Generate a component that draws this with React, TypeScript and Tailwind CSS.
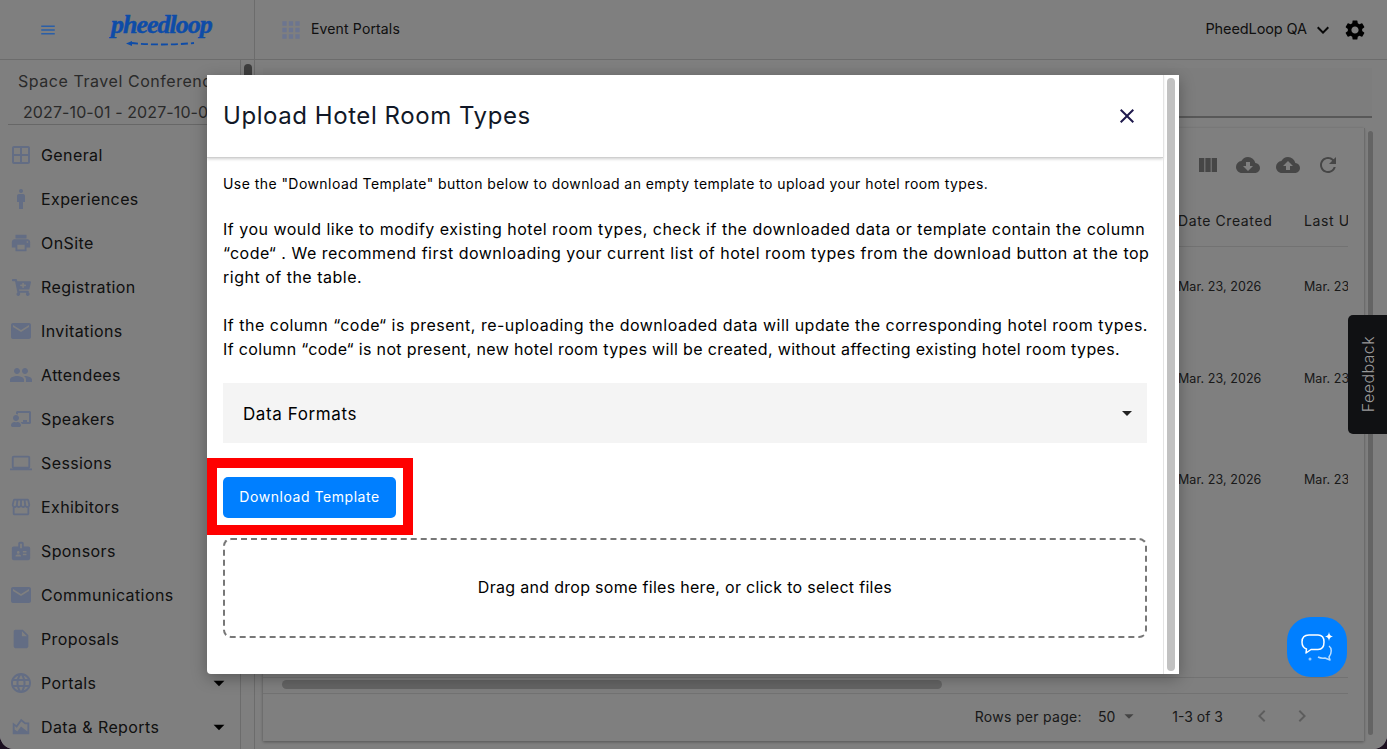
import type { ReactNode } from "react"
import { FaCartPlus, FaChalkboardTeacher } from "react-icons/fa"
import {
  MdApps, MdArrowDropDown, MdBadge, MdChevronLeft, MdChevronRight, MdClose,
  MdCloudDownload, MdCloudUpload, MdEmail, MdExpandMore, MdInsertDriveFile, MdLanguage,
  MdMan, MdMenu, MdOutlineAreaChart, MdOutlineLaptop, MdOutlineStorefront, MdOutlineWindow, MdPeople,
  MdPrint, MdRefresh, MdSettings, MdViewColumn,
} from "react-icons/md"

const navItems: { label: string; icon: ReactNode; caret?: boolean }[] = [
  { label: "General", icon: <MdOutlineWindow size={24} /> },
  { label: "Experiences", icon: <MdMan size={24} /> },
  { label: "OnSite", icon: <MdPrint size={22} /> },
  { label: "Registration", icon: <FaCartPlus size={19} /> },
  { label: "Invitations", icon: <MdEmail size={24} /> },
  { label: "Attendees", icon: <MdPeople size={24} /> },
  { label: "Speakers", icon: <FaChalkboardTeacher size={20} /> },
  { label: "Sessions", icon: <MdOutlineLaptop size={22} /> },
  { label: "Exhibitors", icon: <MdOutlineStorefront size={22} /> },
  { label: "Sponsors", icon: <MdBadge size={22} /> },
  { label: "Communications", icon: <MdEmail size={24} /> },
  { label: "Proposals", icon: <MdInsertDriveFile size={22} /> },
  { label: "Portals", icon: <MdLanguage size={24} />, caret: true },
  { label: "Data & Reports", icon: <MdOutlineAreaChart size={22} />, caret: true },
]

const dateRows = ["h-[80px]", "h-[104px]", "h-[98px]"]

function Sidebar() {
  return (
    <aside className="relative flex h-full w-[255px] shrink-0 border-r border-[#d8d8d8]">
      <div className="w-[240px] overflow-hidden">
        <div className="ml-[8px] h-[65px] w-[232px] border-b border-[#cfcfcf] pt-[9px]">
          <div className="ml-[10px] whitespace-nowrap text-[16px] leading-[24px] tracking-[0.55px] text-[#555]">Space Travel Conference</div>
          <div className="ml-[15px] mt-[7px] whitespace-nowrap text-[16px] leading-[24px] tracking-[0.1px] text-[#555]">2027-10-01 - 2027-10-07</div>
        </div>
        <nav className="pt-[8px]">
          {navItems.map((item) => (
            <div key={item.label} className="flex h-[44px] items-center">
              <div className="relative z-10 flex w-[41px] justify-center pl-[1px] text-[#636d84]">{item.icon}</div>
              <span className="whitespace-nowrap text-[16px] tracking-[0.4px] text-[#222]">{item.label}</span>
              {item.caret && <MdArrowDropDown size={26} className="absolute left-[206px] text-black" />}
            </div>
          ))}
        </nav>
      </div>
      <div className="w-[14px] border-l border-[#d8d8d8] pl-[3px] pt-[4px]">
        <div className="h-[40px] w-[8px] rounded-full bg-[#7a7a7a]" />
      </div>
    </aside>
  )
}

function TableCard() {
  return (
    <section className="flex h-[613px] w-[1101px] flex-col bg-white pr-[16px] shadow-[0_1px_3px_rgba(0,0,0,0.35)]">
      <div className="flex h-[70px] shrink-0 items-center justify-end gap-[16px] pr-[8px] pt-[3px] text-[#8c8c8c]">
        <MdViewColumn size={24} />
        <MdCloudDownload size={24} />
        <MdCloudUpload size={24} />
        <MdRefresh size={24} />
      </div>
      <div className="flex h-[49px] shrink-0 items-center justify-end border-b border-[#e4e4e4] pb-[4px] text-[14px] tracking-[0.6px] text-[#333]">
        <div className="w-[126px] whitespace-nowrap">Date Created</div>
        <div className="w-[44px] overflow-hidden whitespace-nowrap">Last Updated</div>
      </div>
      {dateRows.map((rowHeight, i) => (
        <div key={i} className={`flex items-center justify-end text-[12.5px] tracking-[0.08px] text-[#333] ${rowHeight}`}>
          <div className="w-[126px] whitespace-nowrap">Mar. 23, 2026</div>
          <div className="w-[44px] overflow-hidden whitespace-nowrap">Mar. 23, 2026</div>
        </div>
      ))}
      <div className="mt-auto border-y border-[#e4e4e4] pb-[4px] pl-[19px] pt-[2px]">
        <div className="h-[9px] w-[660px] rounded-full bg-[#c8c8c8]" />
      </div>
      <div className="flex h-[47px] items-center justify-end pb-[3px] text-[14px] text-[#333]">
        <span className="tracking-[0.3px]">Rows per page:</span>
        <span className="ml-[16px]">50</span>
        <MdArrowDropDown size={22} className="ml-[3px] text-[#888]" />
        <span className="ml-[32px]">1-3 of 3</span>
        <MdChevronLeft size={24} className="ml-[27px] text-[#bbb]" />
        <MdChevronRight size={24} className="ml-[16px] mr-[34px] text-[#bbb]" />
      </div>
    </section>
  )
}

function Page() {
  return (
    <div className="flex h-full flex-col bg-white">
      <header className="flex h-[60px] shrink-0 items-center border-b border-[#d8d8d8]">
        <div className="flex h-full w-[255px] shrink-0 items-center border-r border-[#d8d8d8] pl-[39px]">
          <MdMenu size={18} className="relative z-10 text-[#2a5fa8]" />
          <div className="relative z-10 ml-[54px] h-[50px] w-[100px]">
            <span className="block whitespace-nowrap text-[26px] font-bold italic leading-[40px] tracking-[-1px] text-[#0e4ca8] [-webkit-text-stroke:0.5px_#0e4ca8] [font-family:'Liberation_Serif',serif]">pheedloop</span>
            <svg viewBox="0 0 70 6" className="absolute left-[15px] top-[36px] h-[6px] w-[70px]" fill="none">
              <path d="M5 2 Q36 5 68 2" stroke="#0e4ca8" strokeWidth="1.8" strokeDasharray="7 3" />
              <path d="M0 2.5 L6 0 L6 5 Z" fill="#0e4ca8" />
            </svg>
          </div>
        </div>
        <MdApps size={26} className="relative z-10 ml-[23px] text-[#6c7590]" />
        <span className="ml-[7px] pb-[2px] text-[14px] tracking-[0.15px] text-[#222]">Event Portals</span>
        <span className="ml-auto pb-[1px] text-[14.5px] tracking-[-0.1px] text-[#222]">PheedLoop QA</span>
        <MdExpandMore size={24} className="ml-[4px] text-[#111]" />
        <MdSettings size={24} className="ml-[8px] mr-[20px] text-black" />
      </header>
      <div className="flex min-h-0 flex-1">
        <Sidebar />
        <main className="flex min-w-0 flex-1 flex-col pl-[8px] pt-[8px]">
          <div className="h-[50px] w-[1109px] border-b-2 border-[#b0b0b0] bg-[#fafafa]" />
          <div className="mt-[10px] flex">
            <TableCard />
            <div className="border-l border-[#d8d8d8] pl-[3px] pt-[3px]">
              <div className="h-[604px] w-[5px] rounded-full bg-[#c8c8c8]" />
            </div>
          </div>
        </main>
      </div>
    </div>
  )
}

function UploadModal() {
  return (
    <div className="flex h-[599px] w-[972px] overflow-hidden rounded-bl-[4px] bg-white shadow-[0_4px_16px_rgba(0,0,0,0.3)]">
      <div className="flex w-[956px] shrink-0 flex-col">
        <div className="flex h-[83px] shrink-0 items-center justify-between border-b border-[#cfcfcf] pl-[16px] pr-[24px] shadow-[0_1px_3px_rgba(0,0,0,0.2)]">
          <h2 className="text-[24px] font-normal tracking-[0.56px] text-[#111827]">Upload Hotel Room Types</h2>
          <MdClose size={24} className="text-[#1f1a4d]" />
        </div>
        <div className="px-[16px] pt-[16px] text-black">
          <p className="h-[20px] whitespace-nowrap text-[14px] leading-[20px] tracking-[0.44px]">Use the "Download Template" button below to download an empty template to upload your hotel room types.</p>
          <div className="mt-[23px] whitespace-nowrap text-[16px] leading-[24px] tracking-[0.5px]">
            If you would like to modify existing hotel room types, check if the downloaded data or template contain the column<br />
            “code“ . We recommend first downloading your current list of hotel room types from the download button at the top<br />
            right of the table.<br />
            <br />
            If the column “code“ is present, re-uploading the downloaded data will update the corresponding hotel room types.<br />
            <span className="tracking-[0.36px]">If column “code“ is not present, new hotel room types will be created, without affecting existing hotel room types.</span>
          </div>
          <div className="mt-[22px] flex h-[60px] items-center justify-between bg-[#f4f4f4] pl-[20px] pr-[8px]">
            <span className="pt-[3px] text-[17px] tracking-[0.6px]">Data Formats</span>
            <MdArrowDropDown size={24} className="text-[#222]" />
          </div>
          <div className="relative mt-[34px] w-[173px]">
            <button className="h-[41px] w-full rounded-[5px] bg-[#007fff] pb-[2px] text-[14px] tracking-[0.55px] text-white">Download Template</button>
            <div className="absolute -bottom-[17px] -left-[16px] -right-[17px] -top-[19px] border-[10px] border-[#ff0000]" />
          </div>
          <div className="mt-[20px] flex h-[100px] items-center justify-center rounded-[8px] border-2 border-dashed border-[#777] pb-[2px] text-[16px] tracking-[0.3px]">
            Drag and drop some files here, or click to select files
          </div>
        </div>
      </div>
      <div className="flex flex-1 justify-center border-l border-[#e4e4e4] pr-[2px] pt-[3px]">
        <div className="h-[593px] w-[8px] rounded-full bg-[#c1c1c1]" />
      </div>
    </div>
  )
}

export default function App() {
  return (
    <div className="h-[749px] w-[1387px] overflow-hidden bg-[#1c1020] [font-family:Inter,sans-serif]">
      <div className="relative h-[749px] overflow-hidden rounded-b-[14px]">
        <Page />
        <div className="absolute inset-0 flex items-start justify-start bg-black/50 pl-[207px] pt-[75px]">
          <UploadModal />
        </div>
        <div className="absolute right-0 top-[315px] flex h-[119px] w-[39px] items-center justify-center rounded-l-[5px] bg-[#101113]">
          <span className="rotate-180 text-[16px] font-light tracking-[0.4px] text-[#999] [writing-mode:vertical-rl]">Feedback</span>
        </div>
        <div className="absolute left-[1287px] top-[617px] flex h-[60px] w-[60px] items-center justify-center rounded-[24px] bg-[#007fff]">
          <svg viewBox="0 0 60 60" className="h-[60px] w-[60px]" fill="none">
            <path d="M22 18 H31 C35 18 37 20.5 37 25 C37 30 35 32.5 31 32.5 H24 L19 36 L19.5 32 C16.5 31 15 28.5 15 25 C15 20.5 17.5 18 22 18 Z" stroke="#fff" strokeWidth="1.5" strokeLinejoin="round" />
            <path d="M42 15 C42.5 18 43.5 19 46 19.5 C43.5 20 42.5 21 42 24 C41.5 21 40.5 20 38 19.5 C40.5 19 41.5 18 42 15 Z" fill="#fff" />
            <path d="M42 29 C45 31 45 36 42 40 L43 43 L38 41 C35 41.5 33 41 31 40" stroke="#b8dcff" strokeWidth="1.5" strokeLinejoin="round" />
            <circle cx="23" cy="42" r="1.5" fill="#8fc6ff" />
          </svg>
        </div>
      </div>
    </div>
  )
}
